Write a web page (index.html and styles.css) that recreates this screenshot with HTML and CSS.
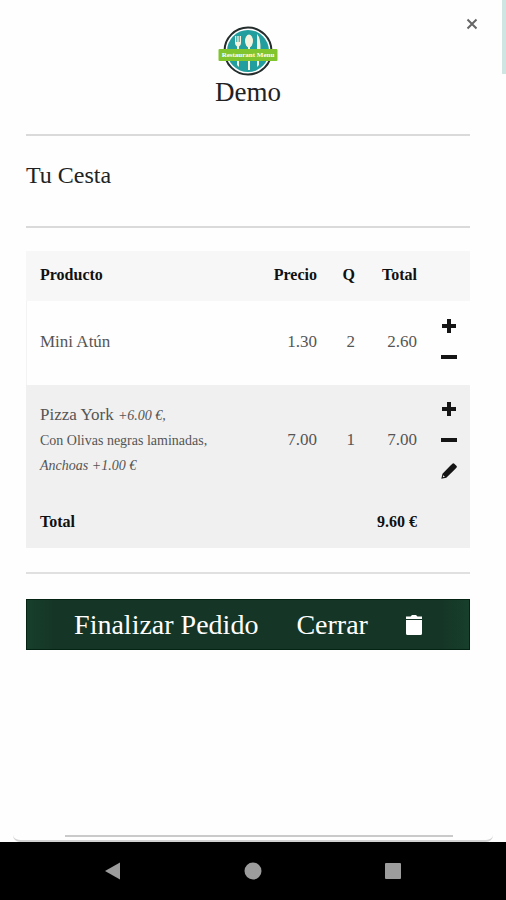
FILE: index.html
```html
<!DOCTYPE html>
<html lang="es">
<head>
<meta charset="utf-8">
<meta name="viewport" content="width=device-width, initial-scale=1">
<title>Tu Cesta</title>
<link rel="stylesheet" href="styles.css">
</head>
<body>
<svg class="sprite" aria-hidden="true">
  <symbol id="plus" viewBox="0 0 16 16"><path d="M6 1h4v5h5v4h-5v5H6v-5H1V6h5z"/></symbol>
  <symbol id="minus" viewBox="0 0 16 16"><path d="M0 6h16v4H0z"/></symbol>
  <symbol id="pencil" viewBox="0 0 16 16"><path d="M9.500 2.500 11.700.600q.8-.6 1.600.1l2.300 2.300q.6.800 0 1.500L13.500 6.700 5.300 14.700.3 15.800l1.200-5.100zM2.300 12.200l-.5 2.100 2.100-.5z" fill-rule="evenodd"/></symbol>
</svg>
<div class="page">
  <main class="cart">
    <button class="close" aria-label="Volver">
      <svg viewBox="0 0 12 12"><path d="m1.500 1.500 9 9m0-9-9 9"/></svg>
    </button>
    <header class="brand">
      <svg class="logo" viewBox="0 0 60 50" role="img" aria-label="Restaurant Menu">
        <circle cx="30" cy="25" r="23.5" fill="#fff" stroke="#242c2c" stroke-width="2"/>
        <circle cx="30" cy="25" r="21" fill="#219e9d"/>
        <g fill="#f5f3df">
          <path d="M17 10h1.300v6h1V10h1.400v6h1V10H23v7q0 2.500-2 3.500V41l-2-2V20.500q-2-1-2-3.500z"/>
          <ellipse cx="31" cy="15" rx="4" ry="6.500"/><path d="M30 20h2v24h-2z"/>
          <path d="M39 8q4 4 3.500 17H41v14l-2 2z"/>
        </g>
        <rect x="0.500" y="23" width="59" height="12" rx="1" fill="#80c52d"/>
        <text x="30" y="31" text-anchor="middle" class="logo-text">Restaurant Menu</text>
      </svg>
      <h1>Demo</h1>
    </header>
    <h2>Tu Cesta</h2>
    <table>
      <colgroup><col><col class="col-price"><col class="col-qty"><col class="col-total"><col class="col-actions"></colgroup>
      <thead>
        <tr><th scope="col">Producto</th><th scope="col" class="num">Precio</th><th scope="col" class="num">Q</th><th scope="col" class="num">Total</th><td></td></tr>
      </thead>
      <tbody>
        <tr>
          <td>Mini Atún</td><td class="num">1.30</td><td class="num">2</td><td class="num">2.60</td>
          <td class="actions-cell"><div class="actions">
            <button aria-label="Añadir Mini Atún"><svg><use href="#plus"/></svg></button>
            <button aria-label="Quitar Mini Atún"><svg><use href="#minus"/></svg></button>
          </div></td>
        </tr>
        <tr class="shaded">
          <td>Pizza York <small><em>+6.00 €,</em><br>Con Olivas negras laminadas,<br><em>Anchoas +1.00 €</em></small></td>
          <td class="num">7.00</td><td class="num">1</td><td class="num">7.00</td>
          <td class="actions-cell"><div class="actions">
            <button aria-label="Añadir Pizza York"><svg><use href="#plus"/></svg></button>
            <button aria-label="Quitar Pizza York"><svg><use href="#minus"/></svg></button>
            <button aria-label="Editar Pizza York"><svg><use href="#pencil"/></svg></button>
          </div></td>
        </tr>
      </tbody>
      <tfoot>
        <tr class="shaded"><th scope="row">Total</th><td colspan="3" class="num sum">9.60 €</td><td></td></tr>
      </tfoot>
    </table>
    <hr>
    <div class="checkout">
      <button>Finalizar Pedido</button>
      <button>Cerrar</button>
      <button aria-label="Vaciar cesta"><svg class="trash" viewBox="0 0 16 20"><path d="M0 1.500h4.500L6 0h4l1.500 1.500H16V4H0zM0 5h16v13.500q0 1.500-1.500 1.500h-13Q0 20 0 18.500z"/></svg></button>
    </div>
  </main>
  <div class="sheet-edge"></div>
  <nav class="system-bar" aria-label="Sistema">
    <button aria-label="Atrás"><svg viewBox="0 0 18 18"><path d="M1 9 16 .5v17z"/></svg></button>
    <button aria-label="Inicio"><svg viewBox="0 0 18 18"><circle cx="9" cy="9" r="8.500"/></svg></button>
    <button aria-label="Recientes"><svg viewBox="0 0 18 18"><rect x="1" y="1" width="16" height="16" rx="1"/></svg></button>
  </nav>
</div>
<div class="scroll-thumb"></div>
</body>
</html>
```
FILE: styles.css
```css
* {
  box-sizing: border-box;
}

body {
  margin: 0;
  background: #fefefe;
  color: #222;
  font-family: "Liberation Serif", serif;
}

button {
  display: block;
  padding: 0;
  border: 0;
  background: none;
  color: inherit;
  font: inherit;
  cursor: pointer;
}

svg {
  display: block;
  fill: currentColor;
}

.sprite {
  position: absolute;
  width: 0;
  height: 0;
}

.page {
  display: flex;
  flex-direction: column;
  min-height: 100vh;
}

.cart {
  position: relative;
  flex: 1;
  padding: 26px 36px 26px 26px;
}

.close {
  position: absolute;
  top: 18px;
  right: 28px;
  color: #666;
}

.close svg {
  width: 12px;
  height: 12px;
  fill: none;
  stroke: currentColor;
  stroke-width: 2;
}

.brand {
  display: flex;
  flex-direction: column;
  align-items: center;
  height: 110px;
  border-bottom: 2px solid #dadada;
}

.logo {
  width: 60px;
  height: 50px;
}

.logo-text {
  fill: #fff;
  font-size: 7px;
  font-weight: bold;
}

h1,
h2 {
  margin: 0;
  font-weight: normal;
}

h1 {
  font-size: 27px;
  line-height: 32px;
}

h2 {
  padding: 23px 0 35px;
  border-bottom: 2px solid #dadada;
  font-size: 24px;
  line-height: 32px;
}

table {
  width: 100%;
  margin: 23px 0;
  border-collapse: collapse;
  table-layout: fixed;
  color: #555;
  font-size: 17px;
  line-height: 25px;
  box-shadow: inset 1px 0 #f3f3f3;
}

.col-price {
  width: 70px;
}

.col-qty {
  width: 38px;
}

.col-total {
  width: 62px;
}

.col-actions {
  width: 40px;
}

th,
td {
  padding: 10px 13px 14px 14px;
  text-align: left;
}

th,
.sum {
  color: #111;
  font-size: 16px;
  font-weight: bold;
}

thead {
  background: #f7f7f7;
}

thead tr {
  height: 50px;
}

tbody tr {
  height: 84px;
}

tfoot tr {
  height: 50px;
}

.shaded {
  background: #f0f0f0;
}

.num {
  padding-left: 0;
  text-align: right;
}

small {
  font-size: 14px;
  line-height: 1;
}

.actions-cell {
  padding: 16px 13px 19px 11px;
}

.actions {
  display: flex;
  flex-direction: column;
  gap: 15px;
  color: #151515;
}

.actions svg {
  width: 16px;
  height: 16px;
}

hr {
  height: 2px;
  margin: 24px 0 25px;
  border: 0;
  background: #e0e0e0;
}

.checkout {
  display: flex;
  align-items: center;
  justify-content: center;
  gap: 38px;
  height: 51px;
  border: 1px solid #052313;
  background: linear-gradient(90deg, #173f2b, #153626 6%, #153626 94%, #173f2b);
  color: #fff;
  font-size: 28px;
}

.trash {
  width: 16px;
  height: 20px;
}

.sheet-edge {
  height: 7px;
  margin: 0 13px;
  border-bottom: 2px solid #d2d2d2;
  border-radius: 0 0 8px 8px;
}

.sheet-edge::before {
  content: "";
  display: block;
  height: 2px;
  margin: 0 40px 0 52px;
  background: #cacaca;
}

.system-bar {
  display: flex;
  align-items: center;
  justify-content: space-around;
  height: 58px;
  padding: 0 43px;
  background: #000;
  color: #9c9c9c;
}

.system-bar svg {
  width: 18px;
  height: 18px;
}

.scroll-thumb {
  position: absolute;
  top: 0;
  right: 0;
  width: 4px;
  height: 74px;
  background: #cfe5e1;
}
```
